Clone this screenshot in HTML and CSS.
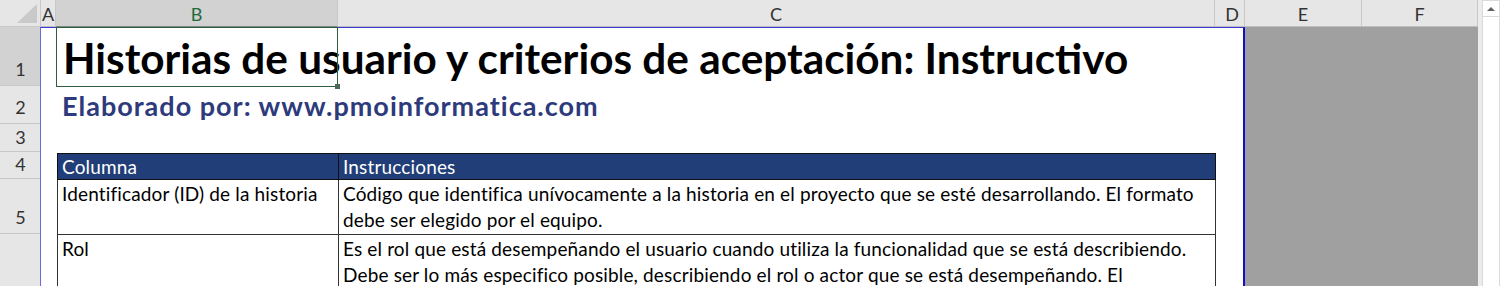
FILE: index.html
```html
<!DOCTYPE html>
<html lang="es">
<head>
<meta charset="utf-8">
<title>Historias de usuario</title>
<link rel="stylesheet" href="styles.css">
</head>
<body>
<div class="app">
  <div class="sheet">
    <div class="corner"><span class="tri"></span></div>
    <div class="colhdr">A</div>
    <div class="colhdr sel">B</div>
    <div class="colhdr">C</div>
    <div class="colhdr right">D</div>
    <div class="colhdr">E</div>
    <div class="colhdr">F</div>

    <div class="rowhdr r1 sel">1</div>
    <div class="rowhdr r2">2</div>
    <div class="rowhdr r3">3</div>
    <div class="rowhdr r4">4</div>
    <div class="rowhdr r5">5</div>
    <div class="rowhdr r6"></div>

    <div class="page">
      <div class="title">Historias de usuario y criterios de aceptación: Instructivo</div>
      <div class="selbox"><span class="handle"></span></div>
      <div class="subtitle">Elaborado por: www.pmoinformatica.com</div>
      <div class="tbl">
        <div class="th c1">Columna</div>
        <div class="th c2">Instrucciones</div>
        <div class="td c1 rA">Identificador (ID) de la historia</div>
        <div class="td c2 rA">Código que identifica unívocamente a la historia en el proyecto que se esté desarrollando. El formato debe ser elegido por el equipo.</div>
        <div class="td c1 rB">Rol</div>
        <div class="td c2 rB">Es el rol que está desempeñando el usuario cuando utiliza la funcionalidad que se está describiendo. Debe ser lo más especifico posible, describiendo el rol o actor que se está desempeñando. El</div>
      </div>
    </div>
    <div class="outside"></div>
  </div>
  <div class="scroll">
    <div class="up"><span class="arrow"></span></div>
    <div class="track"></div>
  </div>
</div>
</body>
</html>
```
FILE: styles.css
```css
html, body {
  margin: 0;
  padding: 0;
  background: #ffffff;
  overflow: hidden;
}
.app {
  display: grid;
  grid-template-columns: 1478px 22px;
  width: 1500px;
  height: 286px;
  font-family: "Lato", "Liberation Sans", sans-serif;
}
.sheet {
  display: grid;
  grid-template-columns: 41px 15px 282px 877px 30px 117px 116px;
  grid-template-rows: 27px 59px 38px 28px 27px 55px 52px;
  background: #e6e6e6;
  overflow: hidden;
}
.corner {
  grid-column: 1;
  grid-row: 1;
  background: #e6e6e6;
  border-right: 1px solid #c8c8c8;
  border-bottom: 1px solid #c8c8c8;
  display: flex;
  justify-content: flex-end;
  align-items: flex-end;
  padding: 0 3px 3px 0;
}
.tri {
  width: 0;
  height: 0;
  border-left: 20px solid transparent;
  border-bottom: 19px solid #c9c9c9;
}
.colhdr {
  grid-row: 1;
  background: #e6e6e6;
  border-right: 1px solid #c8c8c8;
  border-bottom: 1px solid #bdbdbd;
  color: #333;
  font-size: 18px;
  display: flex;
  align-items: center;
  justify-content: center;
  padding-top: 2px;
}
.colhdr.sel {
  background: #d2d2d2;
  color: #1e6b3c;
  border-bottom: 1px solid #7a8a80;
}
.colhdr.right {
  justify-content: flex-end;
  padding-right: 5px;
}
.rowhdr {
  grid-column: 1;
  background: #e6e6e6;
  border-bottom: 1px solid #c8c8c8;
  color: #333;
  font-size: 18px;
  display: flex;
  align-items: flex-end;
  justify-content: center;
  padding-bottom: 5px;
}
.rowhdr.sel { background: #d2d2d2; color: #333; }
.r1 { grid-row: 2; }
.r2 { grid-row: 3; }
.r3 { grid-row: 4; padding-bottom: 3px; }
.r4 { grid-row: 5; padding-bottom: 3px; }
.r5 { grid-row: 6; }
.r6 { grid-row: 7; border-bottom: none; }

.page {
  grid-column: 2 / 6;
  grid-row: 2 / 8;
  background: #ffffff;
  border-top: 1px solid #3a3ad8;
  border-left: 1px solid #6a6ae0;
  border-right: 2px solid #1010c8;
  margin-left: -1px;
  display: grid;
  grid-template-columns: 15px 282px 877px 28px;
  grid-template-rows: 59px 38px 28px 1fr;
}
.title {
  grid-column: 2 / 5;
  grid-row: 1;
  font-weight: 700;
  font-size: 42.3px;
  color: #000;
  padding-left: 7px;
  white-space: nowrap;
  display: flex;
  align-items: flex-end;
  padding-bottom: 8px;
  line-height: 1;
}
.selbox {
  grid-column: 2;
  grid-row: 1;
  border: 1px solid #2e5e3e;
  margin: -1px 0 0 0;
  display: flex;
  justify-content: flex-end;
  align-items: flex-end;
}
.handle {
  width: 5px;
  height: 5px;
  background: #4a6a55;
  margin: 0 -3px -3px 0;
}
.subtitle {
  grid-column: 2 / 5;
  grid-row: 2;
  font-weight: 700;
  font-size: 27px;
  letter-spacing: 1px;
  color: #2d3a7c;
  padding-left: 6px;
  white-space: nowrap;
  display: flex;
  align-items: flex-end;
  padding-bottom: 6px;
  line-height: 1;
}
.tbl {
  grid-column: 2 / 4;
  grid-row: 4;
  display: grid;
  grid-template-columns: 282px 877px;
  grid-template-rows: 27px 55px 55px;
  margin-left: 1px;
  font-size: 19px;
  letter-spacing: 0.15px;
  color: #000;
}
.th {
  background: #213e78;
  color: #fff;
  border-top: 1px solid #111;
  border-bottom: 1px solid #111;
  padding: 2px 0 0 4px;
  line-height: 22px;
}
.th.c1 { border-left: 1px solid #111; border-right: 1px solid #111; }
.th.c2 { border-right: 1px solid #111; }
.td {
  padding: 1px 0 0 4px;
  line-height: 26px;
  border-bottom: 1px solid #333;
}
.td.c1 { border-left: 1px solid #333; border-right: 1px solid #333; }
.td.c2 { border-right: 1px solid #333; padding-right: 8px; }
.td.rB { border-bottom: none; }

.outside {
  grid-column: 6 / 8;
  grid-row: 2 / 8;
  background: #a0a0a0;
}
.scroll {
  background: #ececec;
  display: flex;
  flex-direction: column;
  padding-left: 4px;
}
.up {
  height: 15px;
  background: #fff;
  border: 1px solid #dadada;
  display: flex;
  align-items: center;
  justify-content: center;
}
.arrow {
  width: 0;
  height: 0;
  border-left: 4px solid transparent;
  border-right: 4px solid transparent;
  border-bottom: 4px solid #606060;
}
.track {
  flex: 1;
  background: #fff;
  border-left: 1px solid #dadada;
  border-right: 1px solid #dadada;
}
```
